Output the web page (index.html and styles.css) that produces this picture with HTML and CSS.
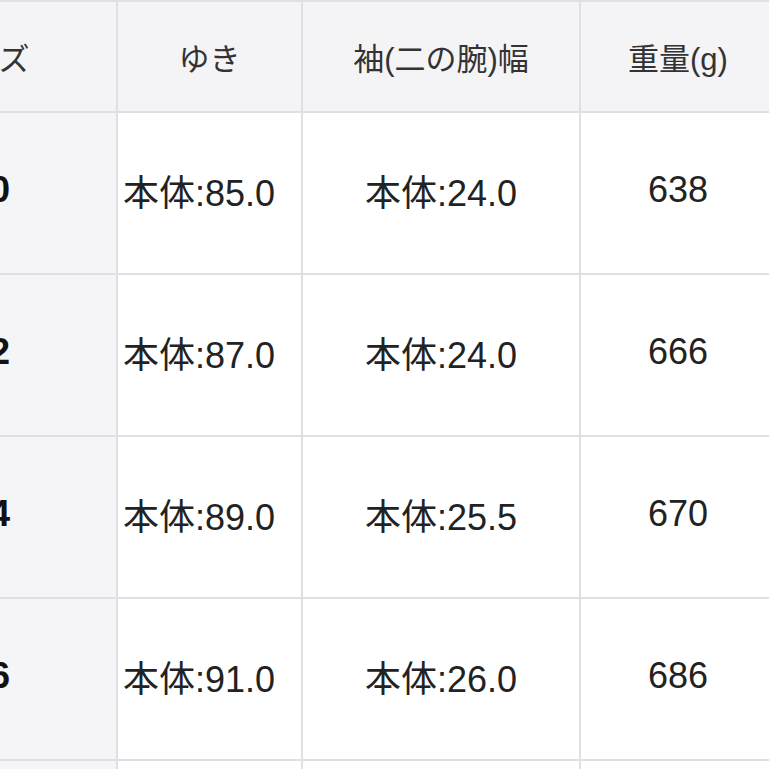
FILE: index.html
```
<!DOCTYPE html>
<html lang="ja">
<head>
<meta charset="utf-8">
<link rel="stylesheet" href="styles.css">
</head>
<body>
<table class="size-table">
  <colgroup>
    <col class="c-size">
    <col class="c-yuki">
    <col class="c-sleeve">
    <col class="c-weight">
  </colgroup>
  <thead>
    <tr>
      <th>サイズ</th>
      <th>ゆき</th>
      <th>袖(二の腕)幅</th>
      <th>重量(g)</th>
    </tr>
  </thead>
  <tbody>
    <tr><th class="size">40</th><td class="yuki">本体:85.0</td><td>本体:24.0</td><td>638</td></tr>
    <tr><th class="size">42</th><td class="yuki">本体:87.0</td><td>本体:24.0</td><td>666</td></tr>
    <tr><th class="size">44</th><td class="yuki">本体:89.0</td><td>本体:25.5</td><td>670</td></tr>
    <tr><th class="size">46</th><td class="yuki">本体:91.0</td><td>本体:26.0</td><td>686</td></tr>
    <tr><th class="size">48</th><td class="yuki">本体:93.0</td><td>本体:26.5</td><td>700</td></tr>
  </tbody>
</table>
</body>
</html>
```
FILE: styles.css
```
html, body {
  margin: 0;
  padding: 0;
  background: #ffffff;
  overflow: hidden;
}
body {
  font-family: "Liberation Sans", "Noto Sans CJK JP", sans-serif;
  color: #222222;
}
.size-table {
  border-collapse: collapse;
  table-layout: fixed;
  width: 926px;
  margin-left: -151px;
  border-top: 2px solid #e4e4ee;
}
.c-size { width: 267px; }
.c-yuki { width: 185px; }
.c-sleeve { width: 278px; }
.c-weight { width: 196px; }

.size-table th,
.size-table td {
  border: 2px solid #e0e0e4;
  text-align: center;
  vertical-align: middle;
  padding: 0;
  white-space: nowrap;
  overflow: hidden;
}
.size-table thead th {
  background: #f4f4f7;
  font-size: 31px;
  font-weight: normal;
  color: #333333;
  height: 109px;
}
.size-table tbody th,
.size-table tbody td {
  height: 154px;
  padding-bottom: 6px;
  font-size: 36px;
}
.size-table tbody th.size {
  background: #f5f5f7;
  font-weight: bold;
  color: #111111;
  font-size: 37px;
  padding-left: 12px;
}
.size-table tbody td {
  background: #ffffff;
  font-weight: normal;
}
.size-table td.yuki {
  text-align: left;
  padding-left: 5px;
}
```
